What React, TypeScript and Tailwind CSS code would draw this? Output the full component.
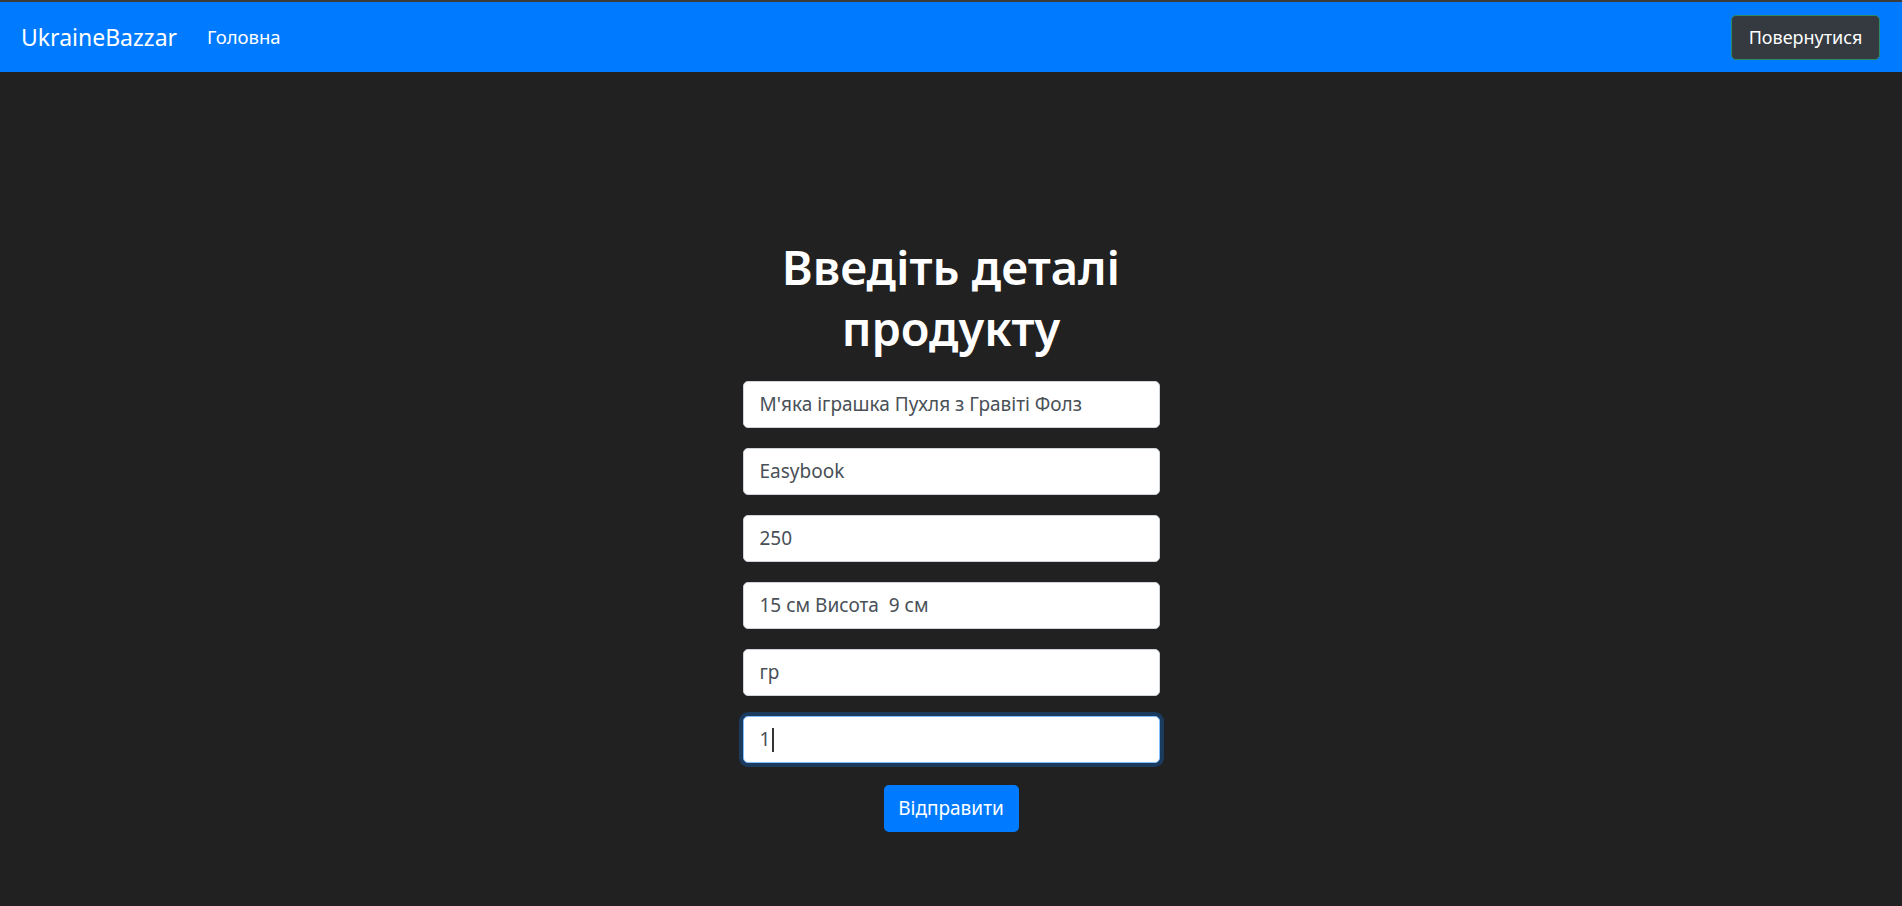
import React from "react";

const font = { fontFamily: '"Noto Sans", "Open Sans", sans-serif' };

function Field({ value, caret }: { value: string; caret?: boolean }) {
  if (caret) {
    return (
      <div className="h-[47px] w-full rounded-[5px] border border-[#80bdff] bg-white pl-[16px] flex items-center text-[19px] text-[#495057] shadow-[0_0_0_4px_#1a3a5e]">
        <span>{value}</span>
        <span className="ml-[2px] inline-block h-[24px] w-[2px] bg-[#333]" />
      </div>
    );
  }
  return (
    <div className="h-[47px] w-full rounded-[5px] border border-[#ced4da] bg-white pl-[16px] flex items-center text-[19px] text-[#495057] whitespace-pre">
      {value}
    </div>
  );
}

export default function App() {
  return (
    <div style={font} className="min-h-[906px] bg-[#212121]">
      <nav className="h-[72px] border-t-2 border-[#3c3c3c] bg-[#007bff] flex items-center justify-between pl-[21px] pr-[22px]">
        <div className="flex items-center">
          <span className="text-[23px] text-white mr-[30px]">UkraineBazzar</span>
          <span className="text-[18.5px] text-white">Головна</span>
        </div>
        <button className="h-[45px] w-[149px] rounded-[5px] border border-[#2e8a66] bg-[#343a40] text-[18px] text-white">
          Повернутися
        </button>
      </nav>
      <main className="flex justify-center pt-[165px]">
        <div className="w-[417px] flex flex-col items-center">
          <h1 className="text-[47px] leading-[61px] font-semibold text-white text-center w-[380px]">
            Введіть деталі продукту
          </h1>
          <div className="mt-[22px] w-full flex flex-col gap-[20px]">
            <Field value="М'яка іграшка Пухля з Гравіті Фолз" />
            <Field value="Easybook" />
            <Field value="250" />
            <Field value="15 см Висота  9 см" />
            <Field value="гр" />
            <Field value="1" caret />
          </div>
          <button className="mt-[22px] h-[47px] w-[135px] rounded-[5px] bg-[#007bff] text-[19px] text-white">
            Відправити
          </button>
        </div>
      </main>
    </div>
  );
}
